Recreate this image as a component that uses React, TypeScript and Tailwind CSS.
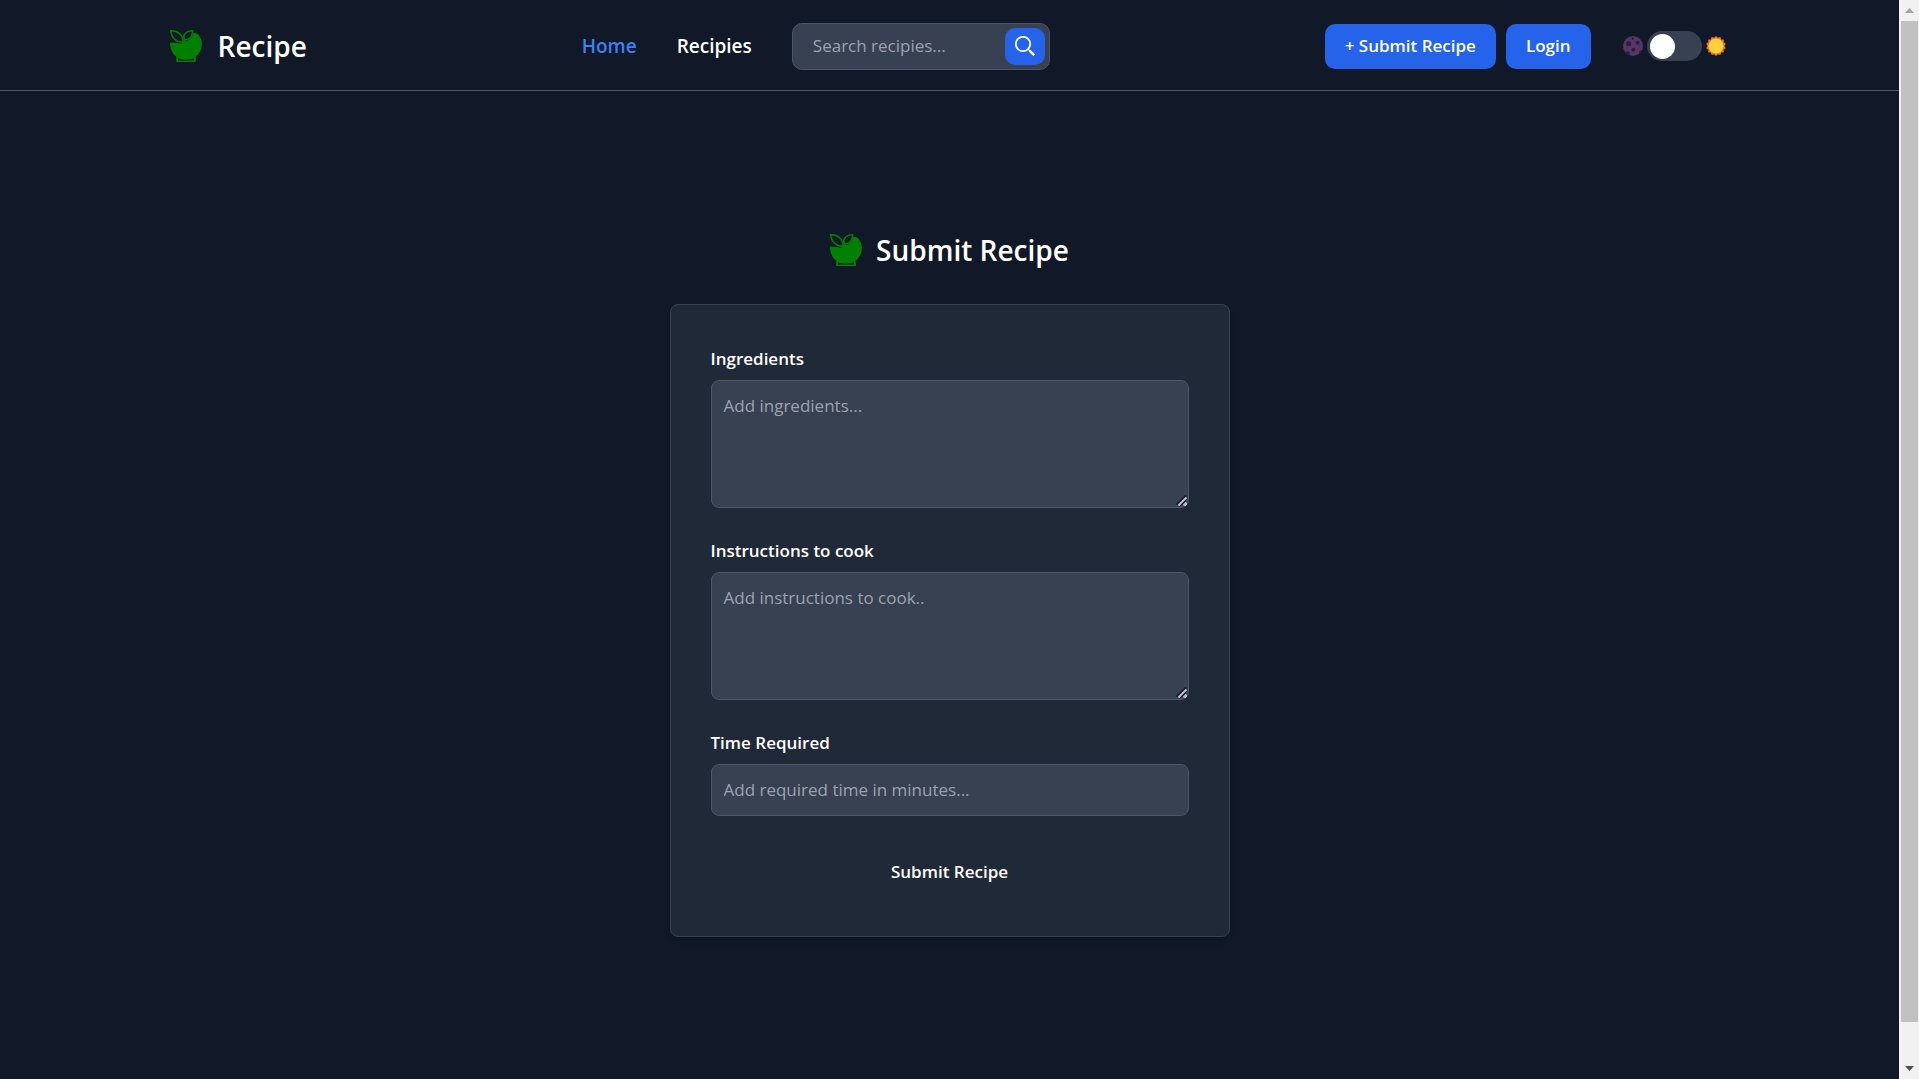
import React from "react";

function BowlIcon() {
  return (
    <svg viewBox="0 0 32 32" className="size-8 shrink-0" aria-hidden="true">
      <path
        d="M0 12.6 12 13.4 14 11C17 11.4 22 9 23 3.4 26 1.8 29.6 4.4 29.8 7.6 31.6 9 32 12 31.8 15 31.6 19.6 29.4 23.8 25.8 26.6V32H6.2V26.6C2.4 24 0 18.6 0 12.6Z"
        fill="#008000"
      />
      <path d="M8 28.3C13 30.2 19 30.2 24 28.3V30.4H8Z" fill="#111827" />
      <path
        d="M.8.8C8 .6 13 5 13.2 12.4 6.4 12.2 1.2 8 .8.8Z"
        fill="#111827"
        stroke="#008000"
        strokeWidth="1.6"
      />
      <path
        d="M22.7.8C17.5.8 14.6 3 13.7 6.8L14.5 10.3C19.5 9.8 22.6 6.5 22.7.8Z"
        fill="#111827"
        stroke="#008000"
        strokeWidth="1.6"
      />
    </svg>
  );
}

function SearchIcon() {
  return (
    <svg viewBox="0 0 20 20" className="size-5" fill="none" stroke="#fff" aria-hidden="true">
      <circle cx="8" cy="8" r="7.2" strokeWidth="1.8" />
      <path d="M13 13 14.8 14.8" strokeWidth="1.2" />
      <path d="M14.6 14.6 19.2 19.2" strokeWidth="2.4" />
    </svg>
  );
}

function MoonIcon() {
  return (
    <svg viewBox="0 0 20 20" className="size-5" aria-hidden="true">
      <circle cx="10" cy="10" r="10" fill="#553765" />
      <g fill="#2f1c40">
        <circle cx="5.7" cy="7.7" r="2.5" />
        <circle cx="14.7" cy="6.8" r="2" />
        <circle cx="10.4" cy="13.7" r="1.9" />
        <circle cx="9.7" cy="2.7" r="1.2" />
        <path d="M2.5 16.5C3 14.8 6 14.6 6.6 16.4 6.9 17.5 6.7 18.5 6 19.2 4.6 18.5 3.4 17.6 2.5 16.5Z" />
        <path d="M18.9 14.4C17.4 13.6 15.7 15 16.2 17.2 17.3 16.5 18.3 15.6 18.9 14.4Z" />
      </g>
    </svg>
  );
}

function SunIcon() {
  const points = Array.from({ length: 28 }, (_, i) => {
    const r = i % 2 ? 8.4 : 10;
    const a = (i * Math.PI) / 14 - Math.PI / 2;
    return `${(10 + r * Math.cos(a)).toFixed(2)},${(10 + r * Math.sin(a)).toFixed(2)}`;
  }).join(" ");
  return (
    <svg viewBox="0 0 20 20" className="size-5" aria-hidden="true">
      <polygon points={points} fill="#f4792c" />
      <circle cx="10" cy="10" r="7.4" fill="#ffd23b" />
    </svg>
  );
}

const fieldClass =
  "block w-full rounded-lg border border-[#4b5563] bg-[#374151] px-3 py-3 text-[17px] leading-[26px] text-white placeholder:text-[#9ca3af] outline-none focus:border-[#3b82f6]";

function Field({ id, label, children }: { id: string; label: string; children: React.ReactNode }) {
  return (
    <div>
      <label htmlFor={id} className="mb-2 block text-[17px] leading-[27px] font-semibold">
        {label}
      </label>
      {children}
    </div>
  );
}

function TextArea({ id, placeholder }: { id: string; placeholder: string }) {
  return (
    <div className="relative">
      <textarea id={id} placeholder={placeholder} className={`${fieldClass} h-[128px]`} />
      <svg
        viewBox="0 0 11 11"
        className="pointer-events-none absolute right-0.5 bottom-0.5 size-[11px]"
        fill="none"
        aria-hidden="true"
      >
        <path d="M.5 9.500 10 .500" stroke="#12161d" strokeWidth="1.500" />
        <path d="M2.500 10.500 10.500 2.500" stroke="#c4c6ca" strokeWidth="2" />
        <path d="M5 10.500 10.500 5" stroke="#12161d" strokeWidth="1.500" />
        <path d="M7.500 10.500 10.500 7.500" stroke="#c4c6ca" strokeWidth="2" />
      </svg>
    </div>
  );
}

function Header() {
  return (
    <header className="border-b border-[#4b5563]">
      <div className="mx-auto flex h-[90px] w-full max-w-[1560px] items-center justify-between pt-0.5 pr-1">
        <a href="#" className="flex items-center gap-4 text-[28px] font-semibold">
          <BowlIcon />
          Recipe
        </a>
        <nav className="flex items-center gap-10 text-[19px] font-semibold">
          <a href="#home" className="text-[#3b82f6]">Home</a>
          <a href="#recipies">Recipies</a>
          <form
            role="search"
            onSubmit={(e) => e.preventDefault()}
            className="flex h-[47px] w-[258px] items-center rounded-[10px] border border-[#4b5563] bg-[#374151] pr-1 pl-5"
          >
            <input
              type="search"
              aria-label="Search recipies"
              placeholder="Search recipies..."
              className="min-w-0 flex-1 bg-transparent text-[17px] font-medium outline-none placeholder:text-[#9ca3af]"
            />
            <button type="submit" aria-label="Search" className="flex h-[37px] w-10 items-center justify-center rounded-[10px] bg-[#2563eb]">
              <SearchIcon />
            </button>
          </form>
        </nav>
        <div className="flex items-center">
          <button type="button" className="h-[45px] rounded-[10px] bg-[#2563eb] px-5 text-[17px] font-semibold">
            + Submit Recipe
          </button>
          <button type="button" className="ml-[10px] h-[45px] rounded-[10px] bg-[#2563eb] px-5 text-[17px] font-semibold">
            Login
          </button>
          <label className="ml-8 flex items-center gap-1">
            <MoonIcon />
            <input
              type="checkbox"
              aria-label="Light theme"
              className="h-[30px] w-[55px] appearance-none rounded-full bg-[#374151] p-[3px] before:block before:size-[25px] before:rounded-full before:bg-white checked:before:ml-auto"
            />
            <SunIcon />
          </label>
        </div>
      </div>
    </header>
  );
}

function Scrollbar() {
  return (
    <div className="sticky top-0 flex h-screen w-5 shrink-0 flex-col items-center bg-[#f1f1f1]" aria-hidden="true">
      <div className="flex h-[21px] items-center justify-center">
        <svg viewBox="0 0 9 5" className="h-[5px] w-[9px]">
          <path d="M0 5 4.5 0 9 5Z" fill="#a3a3a3" />
        </svg>
      </div>
      <div className="flex min-h-0 flex-1 flex-col">
        <div className="h-[96.5%] w-[17px] bg-[#c1c1c1]" />
      </div>
      <div className="flex h-[21px] items-center justify-center">
        <svg viewBox="0 0 9 5" className="h-[5px] w-[9px]">
          <path d="M0 0H9L4.5 5Z" fill="#505050" />
        </svg>
      </div>
    </div>
  );
}

export default function App() {
  return (
    <div className="flex min-h-screen bg-[#111827] font-['Open_Sans','Noto_Sans',sans-serif] text-white">
      <div className="min-w-0 flex-1">
        <Header />
        <main className="flex flex-col items-center px-6 pt-[137px]">
          <h1 className="flex items-center gap-[14px] text-[28px] leading-[44px] font-semibold">
            <BowlIcon />
            Submit Recipe
          </h1>
          <form
            onSubmit={(e) => e.preventDefault()}
            className="mt-8 flex w-full max-w-[560px] flex-col gap-8 rounded-lg border border-[#374151] bg-[#1f2937] p-10 shadow-md"
          >
            <div className="flex flex-col gap-[29px]">
              <Field id="ingredients" label="Ingredients">
                <TextArea id="ingredients" placeholder="Add ingredients..." />
              </Field>
              <Field id="instructions" label="Instructions to cook">
                <TextArea id="instructions" placeholder="Add instructions to cook.." />
              </Field>
              <Field id="time" label="Time Required">
                <input id="time" type="text" placeholder="Add required time in minutes..." className={fieldClass} />
              </Field>
            </div>
            <button type="submit" className="h-12 w-full rounded-lg text-[17px] font-semibold">
              Submit Recipe
            </button>
          </form>
        </main>
      </div>
      <Scrollbar />
    </div>
  );
}
